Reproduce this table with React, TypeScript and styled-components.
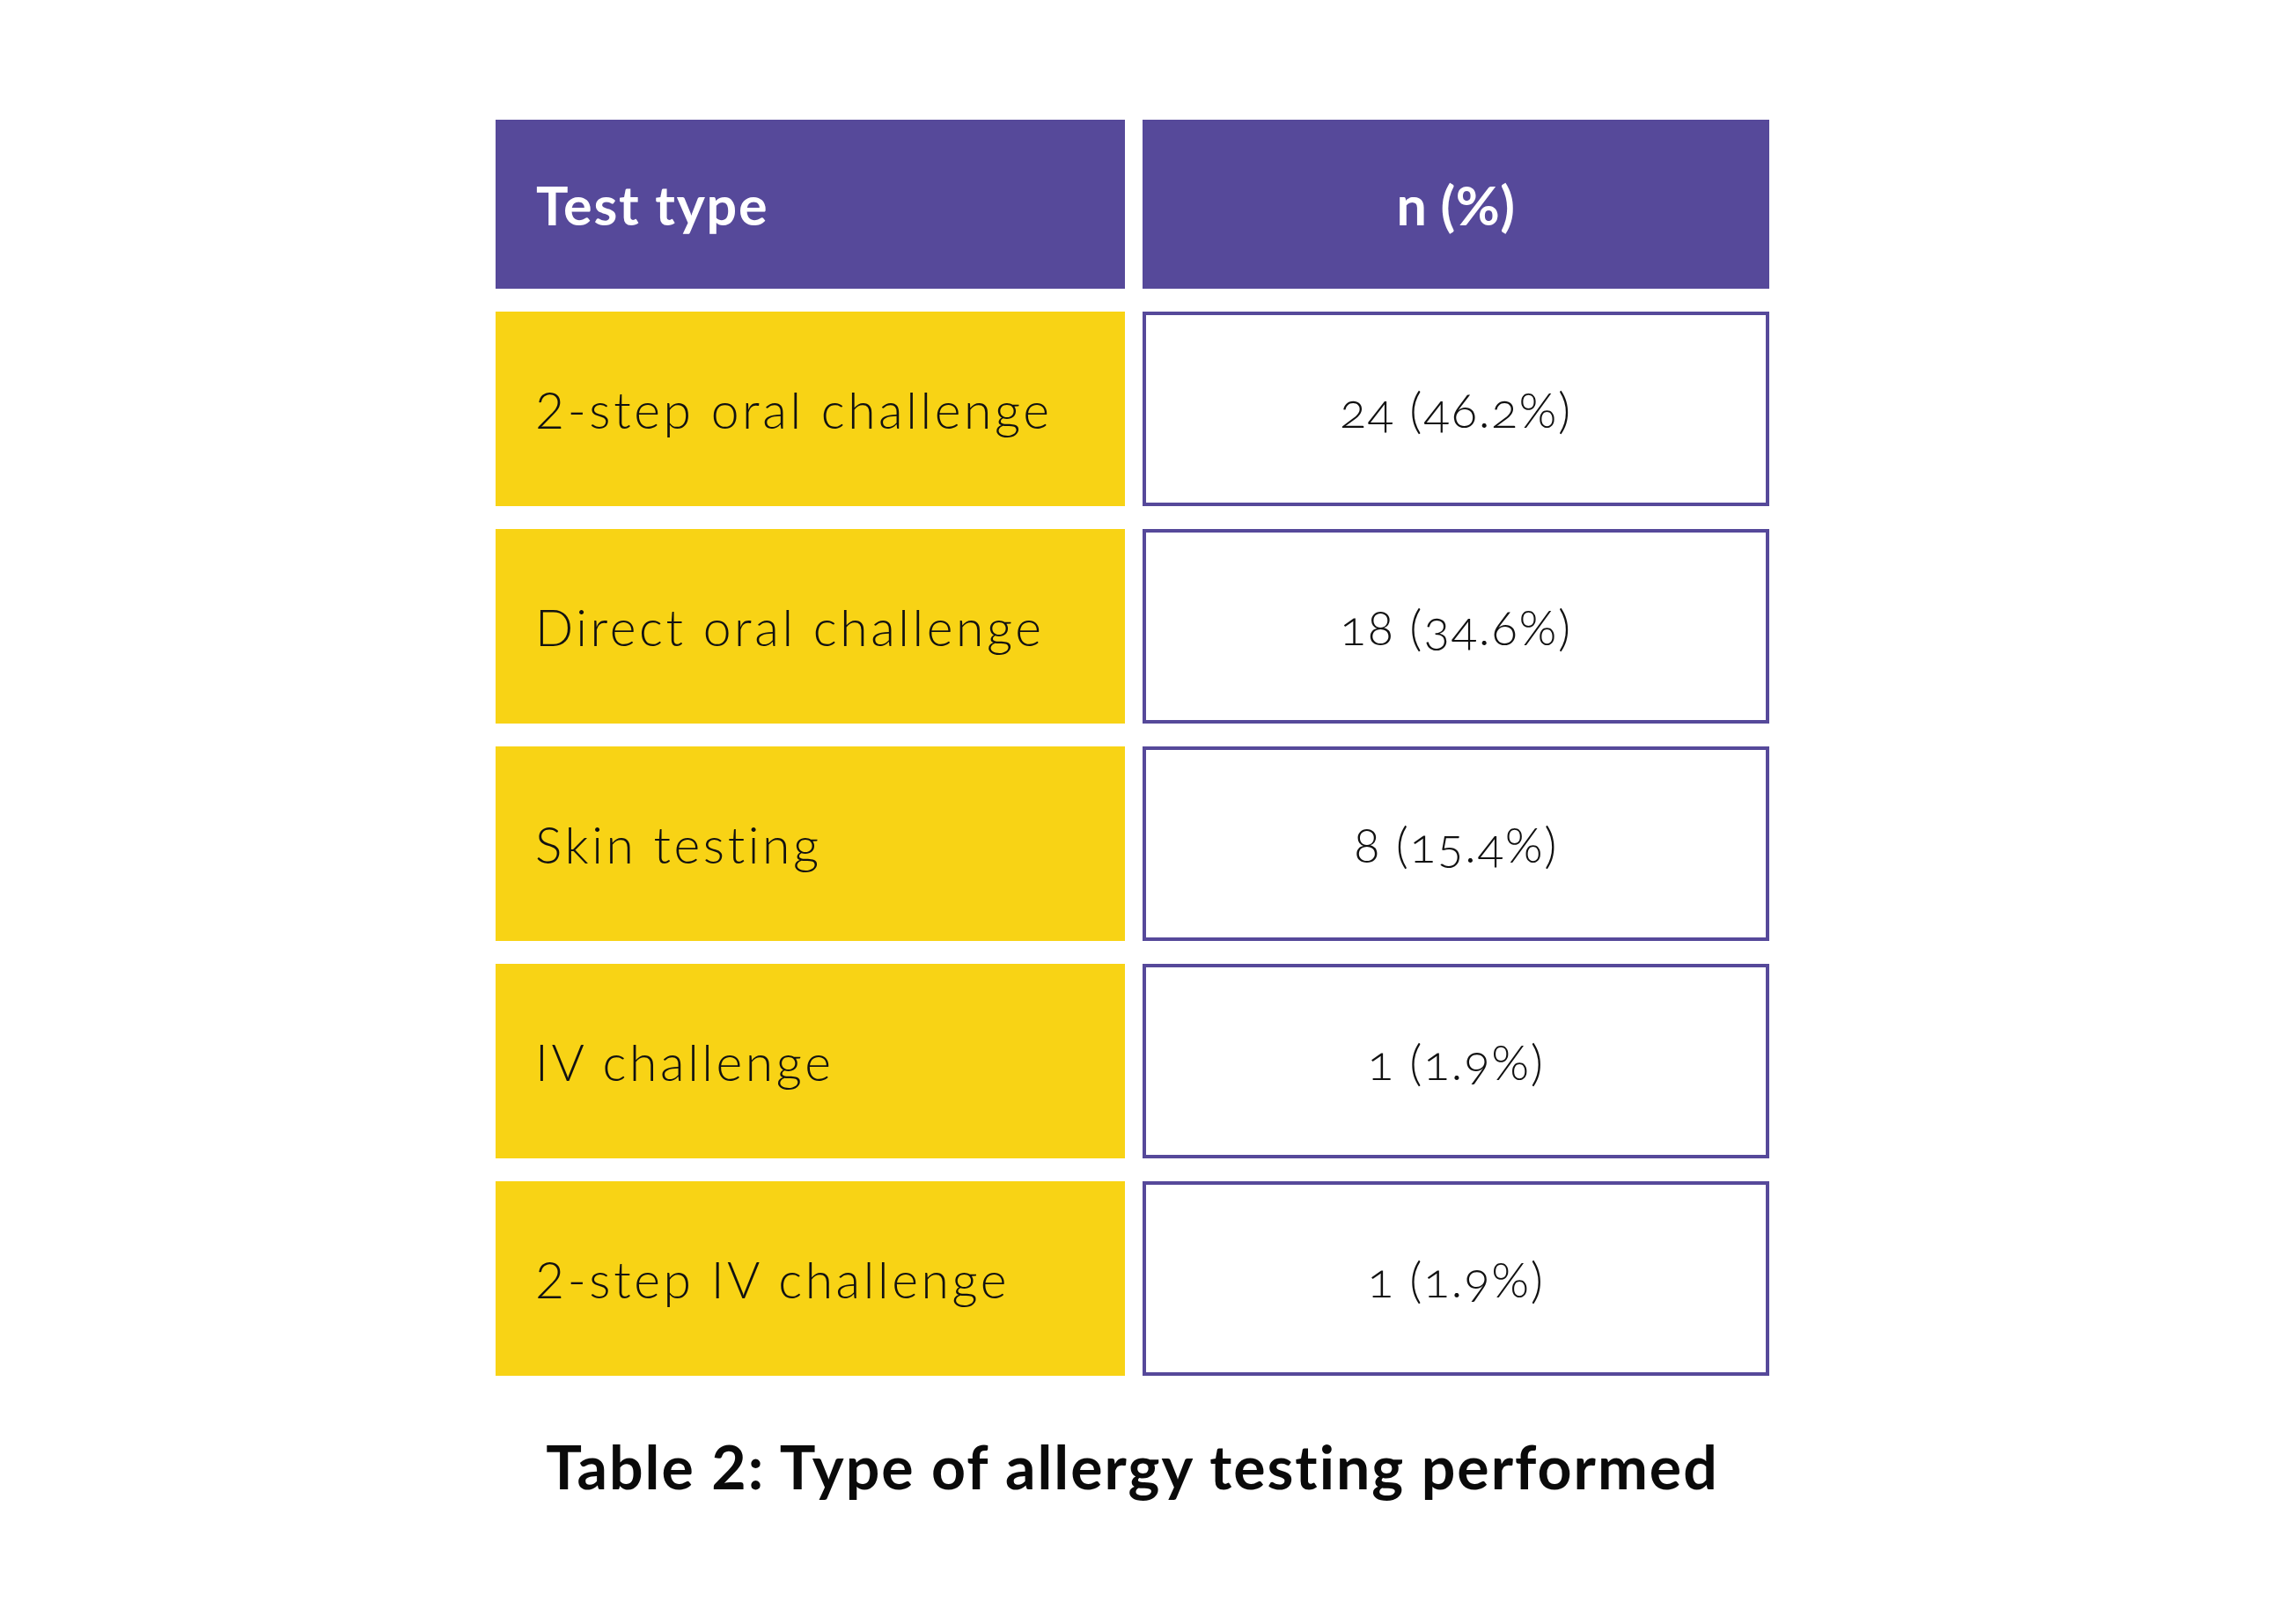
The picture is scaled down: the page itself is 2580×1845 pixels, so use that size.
import React from 'react'
import styled, { createGlobalStyle } from 'styled-components'

const GlobalStyle = createGlobalStyle`
  html, body {
    margin: 0;
    padding: 0;
    background: #ffffff;
  }
  body {
    font-family: Lato, "Open Sans", "Liberation Sans", sans-serif;
  }
`

const PURPLE = '#56499a'
const YELLOW = '#f8d315'

const Page = styled.div`
  width: 2580px;
  min-height: 1845px;
  padding: 136px 0 0 563px;
  box-sizing: border-box;
`

const Figure = styled.figure`
  margin: 0;
  width: 1447px;
  display: flex;
  flex-direction: column;
`

const Grid = styled.div`
  display: grid;
  grid-template-columns: 715px 712px;
  grid-template-rows: 192px;
  grid-auto-rows: 221px;
  column-gap: 20px;
  row-gap: 26px;
`

const HeadCell = styled.div<{ $center?: boolean }>`
  background: ${PURPLE};
  color: #ffffff;
  font-size: 61px;
  font-weight: 700;
  display: flex;
  align-items: center;
  justify-content: ${(p) => (p.$center ? 'center' : 'flex-start')};
  padding: ${(p) => (p.$center ? '0' : '0 0 0 46px')};
  letter-spacing: ${(p) => (p.$center ? '0.5px' : '1.8px')};
`

const LabelCell = styled.div`
  background: ${YELLOW};
  color: #111111;
  font-size: 57px;
  font-weight: 300;
  letter-spacing: 3.6px;
  display: flex;
  align-items: center;
  padding-left: 45px;
`

const ValueCell = styled.div`
  background: #ffffff;
  border: 4px solid ${PURPLE};
  box-sizing: border-box;
  color: #111111;
  font-size: 55px;
  font-weight: 300;
  letter-spacing: 1.6px;
  font-variant-numeric: oldstyle-nums;
  display: flex;
  align-items: center;
  justify-content: center;
`

const Caption = styled.figcaption`
  margin-top: 63px;
  text-align: center;
  font-size: 68px;
  line-height: 80px;
  font-weight: 700;
  letter-spacing: 2px;
  color: #0a0a0a;
`

const rows = [
  { label: '2-step oral challenge', value: '24 (46.2%)' },
  { label: 'Direct oral challenge', value: '18 (34.6%)' },
  { label: 'Skin testing', value: '8 (15.4%)' },
  { label: 'IV challenge', value: '1 (1.9%)' },
  { label: '2-step IV challenge', value: '1 (1.9%)' },
]

const App: React.FC = () => {
  return (
    <Page>
      <GlobalStyle />
      <Figure>
        <Grid>
          <HeadCell>Test type</HeadCell>
          <HeadCell $center>n (%)</HeadCell>
          {rows.map((r) => (
            <React.Fragment key={r.label}>
              <LabelCell>{r.label}</LabelCell>
              <ValueCell>{r.value}</ValueCell>
            </React.Fragment>
          ))}
        </Grid>
        <Caption>Table 2: Type of allergy testing performed</Caption>
      </Figure>
    </Page>
  )
}

export default App
